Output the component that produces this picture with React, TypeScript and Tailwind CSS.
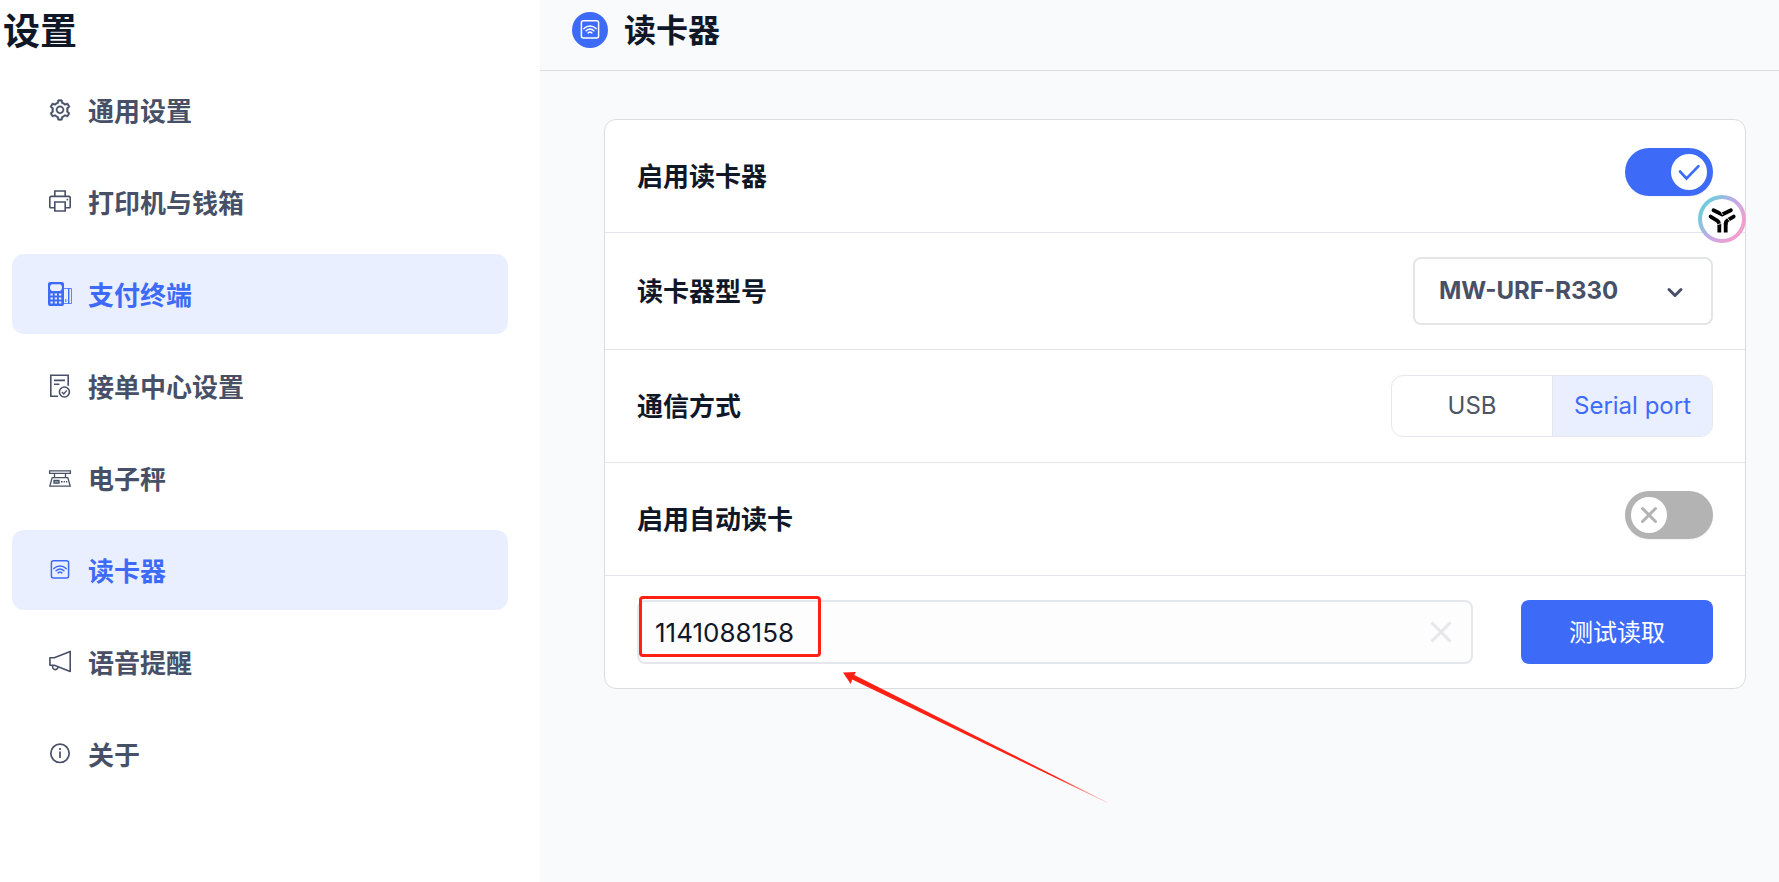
import React, { useState } from 'react';
import { AiOutlineSetting } from 'react-icons/ai';

const PrinterIcon = () => (
  <svg viewBox="0 0 24 24" className="w-6 h-6" fill="none" stroke="currentColor" strokeWidth="1.6">
    <path d="M6.800 6V1h10.400v5" />
    <path d="M6.500 17.700H2.600a.8.8 0 0 1-.8-.8V7.800a1.400 1.400 0 0 1 1.400-1.400h17.600a1.400 1.400 0 0 1 1.400 1.400v9.100a.8.8 0 0 1-.8.8h-3.900" />
    <path d="M6.800 12h10.400v9H6.800z" />
    <path d="M18.600 9.600h1.600" />
  </svg>
);

const PosIcon = () => (
  <svg viewBox="0 0 24 24" className="w-6 h-6" fill="none">
    <path
      fill="currentColor"
      fillRule="evenodd"
      d="M2 0h12a2 2 0 0 1 2 2v20a2 2 0 0 1-2 2H2a2 2 0 0 1-2-2V2a2 2 0 0 1 2-2Zm2 2.2C2.600 2.800 2 4 2 5.600S2.600 8.400 4 9h8c1.400-.6 2-1.800 2-3.400S13.400 2.800 12 2.200H4ZM2.500 11.500h2.300v2H2.500v-2Zm4.200 0H9v2H6.700v-2Zm4.200 0h2.400v2h-2.400v-2Zm-8.400 4h2.300v2H2.500v-2Zm4.200 0H9v2H6.700v-2Zm4.200 0h2.400v2h-2.400v-2Zm-8.400 4h2.300v2H2.500v-2Zm4.200 0H9v2H6.700v-2Zm4.200 0h2.400v2h-2.400v-2Z"
    />
    <path stroke="currentColor" strokeWidth="0.8" d="M16 6.500h7.500v15H16" />
    <path stroke="currentColor" strokeWidth="1.4" d="M20.700 6.500v15" />
    <path stroke="currentColor" strokeWidth="1" d="M17.800 17v3" />
  </svg>
);

const OrderIcon = () => (
  <svg viewBox="0 0 24 24" className="w-6 h-6" fill="none" stroke="currentColor" strokeWidth="1.6">
    <path d="M10 22.200H2.800V1.200h17.400v10.600" />
    <path d="M6 6.400h11M6 10.200h5.400" />
    <circle cx="16.400" cy="18" r="5" />
    <path strokeWidth="1.4" d="M13.900 18l1.900 1.900 3-3.500" />
  </svg>
);

const ScaleIcon = () => (
  <svg viewBox="0 0 24 24" className="w-6 h-6" fill="none" stroke="currentColor" strokeWidth="1.3">
    <path d="M1.600 4.800h20.800v2.600H1.600z" />
    <path d="M6.500 7.500v4M17.500 7.500v4" />
    <path d="M4.200 11.600h15.600l2.400 8.600H1.800l2.400-8.600Z" />
    <path d="M6 14.500h5v2.700H6z" fill="currentColor" fillOpacity="0.5" />
    <path strokeWidth="1.6" d="M13 15.800h1.600M15.700 15.800h1.200M18 15.800h1.200" />
  </svg>
);

const ReaderIcon = () => (
  <svg
    viewBox="0 0 24 24"
    className="w-6 h-6"
    fill="none"
    stroke="currentColor"
    strokeWidth="1.5"
    strokeLinecap="round"
  >
    <rect x="3.400" y="2.700" width="17.200" height="17.300" rx="2" />
    <path d="M5.900 10.600c3.500-3.600 8.700-3.600 12.200 0" />
    <path d="M8.100 12.800c2.400-2.300 5.400-2.300 7.800 0" />
    <path d="M10.200 14.900c1.200-1.100 2.400-1.100 3.600 0" />
  </svg>
);

const VoiceIcon = () => (
  <svg
    viewBox="0 0 24 24"
    className="w-6 h-6"
    fill="none"
    stroke="currentColor"
    strokeWidth="1.6"
    strokeLinejoin="round"
  >
    <path d="M1.900 7.700h4.400L22.200 1.400v20L6.300 15.300H1.900V7.700Z" />
    <path d="M5 15.500a2.700 2.700 0 1 0 5 1.200" />
  </svg>
);

const InfoIcon = () => (
  <svg viewBox="0 0 24 24" className="w-6 h-6" fill="none" stroke="currentColor" strokeWidth="1.7">
    <circle cx="12" cy="11.300" r="9.200" />
    <path d="M12 9.400v6.600M12 6v1.900" />
  </svg>
);

const menu = [
  {
    label: '通用设置',
    icon: <AiOutlineSetting className="w-6 h-6" stroke="currentColor" strokeWidth="14" />,
    active: false,
  },
  { label: '打印机与钱箱', icon: <PrinterIcon />, active: false },
  { label: '支付终端', icon: <PosIcon />, active: true },
  { label: '接单中心设置', icon: <OrderIcon />, active: false },
  { label: '电子秤', icon: <ScaleIcon />, active: false },
  { label: '读卡器', icon: <ReaderIcon />, active: true },
  { label: '语音提醒', icon: <VoiceIcon />, active: false },
  { label: '关于', icon: <InfoIcon />, active: false },
];

const Sidebar = () => {
  return (
    <aside className="w-[540px] shrink-0 bg-white">
      <h1 className="h-[60px] pt-0.5 pl-[3px] text-[37px] leading-[60px] font-bold text-[#101828]">设置</h1>
      <nav className="flex flex-col gap-3 pt-[10px] pl-3 pr-8">
        {menu.map((item) => (
          <a
            key={item.label}
            href="#"
            className={
              item.active
                ? 'flex items-center gap-4 h-20 pl-9 rounded-xl bg-[#e9effe] text-[#3d6bf8] text-[26px] font-bold'
                : 'flex items-center gap-4 h-20 pl-9 rounded-xl text-[#475067] text-[26px] font-bold'
            }
          >
            {item.icon}
            <span className="pt-0.5">{item.label}</span>
          </a>
        ))}
      </nav>
    </aside>
  );
};

type SwitchProps = {
  id: string;
  checked: boolean;
  onChange: (value: boolean) => void;
};

const Switch = ({ id, checked, onChange }: SwitchProps) => (
  <label
    htmlFor={id}
    className={
      checked
        ? 'relative flex justify-end w-[88px] h-12 mb-2 p-[6px] rounded-full bg-[#3d6bf8] text-[#3d6bf8] shadow-xs cursor-pointer'
        : 'relative flex justify-start w-[88px] h-12 mb-2 p-[6px] rounded-full bg-[#b3b3b3] text-[#b3b3b3] shadow-xs cursor-pointer'
    }
  >
    <input
      id={id}
      type="checkbox"
      role="switch"
      className="sr-only"
      checked={checked}
      onChange={(e) => onChange(e.target.checked)}
    />
    <span className="flex items-center justify-center w-9 h-9 rounded-full bg-white">
      <svg viewBox="0 0 36 36" className="w-9 h-9" fill="none" stroke="currentColor" strokeLinecap="round">
        {checked ? (
          <path strokeWidth="2.6" d="M9 17.500l6.500 7L27.500 12.200" />
        ) : (
          <path strokeWidth="3" d="M11.500 11.500l13 13M24.500 11.500l-13 13" />
        )}
      </svg>
    </span>
  </label>
);

const FloatingBadge = () => (
  <button
    type="button"
    aria-label="Assistant"
    className="absolute right-[-1px] top-[75px] w-12 h-12 p-1 rounded-full bg-linear-[125deg,#74cbdc_20%,#c3a8e6_50%,#f0a0cf_80%]"
  >
    <span className="flex items-center justify-center w-10 h-10 rounded-full bg-white">
      <svg viewBox="0 0 40 40" className="w-10 h-10" fill="none" stroke="#000" strokeWidth="3.8">
        <path strokeLinecap="round" strokeLinejoin="round" d="M11.500 11.300l8.700 4.200 8.700-4.200" />
        <path strokeLinecap="round" strokeLinejoin="round" d="M8.600 17.600l6.900 4.200q1.800 1.200 1.800 3.500" />
        <path d="M17.300 24.500v9" />
        <path strokeLinecap="round" strokeLinejoin="round" d="M31.700 17.600l-6 3.600q-2 1.300-2 3.700" />
        <path d="M23.700 24v9.500" />
        <path stroke="#fff" strokeWidth="0.8" d="M18.500 12l2.500 4M14.500 26l5-1.600M25 18.500l3 4" />
      </svg>
    </span>
  </button>
);

const labelClass = 'pt-0.5 text-[26px] leading-10 font-bold text-[#101828]';

const ReaderSettings = () => {
  const [enabled, setEnabled] = useState(true);
  const [autoRead, setAutoRead] = useState(false);
  const [port, setPort] = useState('serial');
  const [cardNo, setCardNo] = useState('1141088158');

  return (
    <section className="relative rounded-xl border border-[#dadce0] bg-white">
      {/* Enable reader */}
      <div className="flex items-center justify-between h-[113px] px-8 border-b border-[#e4e5ea]">
        <label htmlFor="enabled" className={labelClass}>启用读卡器</label>
        <Switch id="enabled" checked={enabled} onChange={setEnabled} />
      </div>

      {/* Reader model */}
      <div className="flex items-center justify-between px-8 py-6 border-b border-[#e4e5ea]">
        <label htmlFor="model" className={labelClass}>读卡器型号</label>
        <div className="grid items-center w-[300px]">
          <select
            id="model"
            className="col-start-1 row-start-1 w-full h-[68px] pl-6 pr-16 appearance-none rounded-lg border-2 border-[#e4e5e7] bg-white text-2xl font-bold text-[#475067]"
          >
            <option>MW-URF-R330</option>
          </select>
          <svg
            viewBox="0 0 24 24"
            className="col-start-1 row-start-1 justify-self-end w-6 h-6 mr-[26px] pointer-events-none"
            fill="none"
            stroke="#475067"
            strokeWidth="3"
            strokeLinecap="round"
            strokeLinejoin="round"
          >
            <path d="M6 10.500l6 6 6-6" />
          </svg>
        </div>
      </div>

      {/* Communication mode */}
      <fieldset className="flex items-center justify-between h-[113px] px-8 border-b border-[#e4e5ea]">
        <span className={labelClass}>通信方式</span>
        <div className="grid grid-cols-2 w-[322px] h-[62px] rounded-xl border border-[#e4e7ec] overflow-hidden text-2xl">
          <label className="relative flex items-center justify-center text-[#4b5565] cursor-pointer has-checked:bg-[#e9effe] has-checked:text-[#3d6bf8]">
            <input
              type="radio"
              name="port"
              className="sr-only"
              checked={port === 'usb'}
              onChange={() => setPort('usb')}
            />
            USB
          </label>
          <label className="relative flex items-center justify-center border-l border-[#e4e7ec] text-[#4b5565] cursor-pointer has-checked:bg-[#e9effe] has-checked:text-[#3d6bf8]">
            <input
              type="radio"
              name="port"
              className="sr-only"
              checked={port === 'serial'}
              onChange={() => setPort('serial')}
            />
            Serial port
          </label>
        </div>
      </fieldset>

      {/* Auto read */}
      <div className="flex items-center justify-between h-[113px] px-8 border-b border-[#e4e5ea]">
        <label htmlFor="auto" className={labelClass}>启用自动读卡</label>
        <Switch id="auto" checked={autoRead} onChange={setAutoRead} />
      </div>

      {/* Test read */}
      <div className="flex items-center gap-12 px-8 py-6">
        <div className="relative flex items-center flex-1 h-16 pl-4 pr-[18px] rounded-lg border-2 border-[#e4e7ec] bg-[#fdfdfd]">
          <input
            type="text"
            aria-label="卡号"
            className="flex-1 min-w-0 bg-transparent text-[26px] text-[#101828] outline-none"
            value={cardNo}
            onChange={(e) => setCardNo(e.target.value)}
          />
          <button type="button" aria-label="清除" onClick={() => setCardNo('')}>
            <svg viewBox="0 0 24 24" className="w-6 h-6" fill="none" stroke="#e4e7ec" strokeWidth="3">
              <path d="M2.500 2.500l19 19M21.500 2.500l-19 19" />
            </svg>
          </button>

          {/* Highlight and pointer over the card number */}
          <div className="absolute left-0 top-[-6px] w-[182px] h-[61px] rounded border-3 border-[#ff2114] pointer-events-none" />
          <svg
            viewBox="0 0 266 132"
            className="absolute left-[204px] top-[70px] w-[266px] h-[132px] pointer-events-none"
          >
            <defs>
              <linearGradient id="tail" x1="0" y1="0" x2="1" y2="0">
                <stop offset="0.8" stopColor="#ff2114" />
                <stop offset="1" stopColor="#ff2114" stopOpacity="0.2" />
              </linearGradient>
            </defs>
            <path fill="url(#tail)" d="M0 .5L13 0 11.300 3 264.300 130.200 263.900 130.800 9.200 7.500 7.700 12Z" />
          </svg>
        </div>
        <button type="button" className="w-48 h-16 pt-0.5 rounded-lg bg-[#3d6bf8] text-2xl text-white">
          测试读取
        </button>
      </div>

      <FloatingBadge />
    </section>
  );
};

const App = () => {
  return (
    <div className="flex min-h-screen bg-white font-['Inter','Noto_Sans_CJK_SC',sans-serif]">
      <Sidebar />
      <main className="flex-1 min-w-0 bg-[#f9fafc]">
        <header className="flex items-center gap-4 h-[71px] pl-8 pb-[10px] border-b border-[#dadce0]">
          <span className="flex items-center justify-center w-9 h-9 rounded-full bg-[#3d6bf8] text-white">
            <ReaderIcon />
          </span>
          <h2 className="pt-0.5 text-[32px] leading-[48px] font-bold text-[#101828]">读卡器</h2>
        </header>
        <div className="pt-12 pl-16 pr-[33px]">
          <ReaderSettings />
        </div>
      </main>
    </div>
  );
};

export default App;
